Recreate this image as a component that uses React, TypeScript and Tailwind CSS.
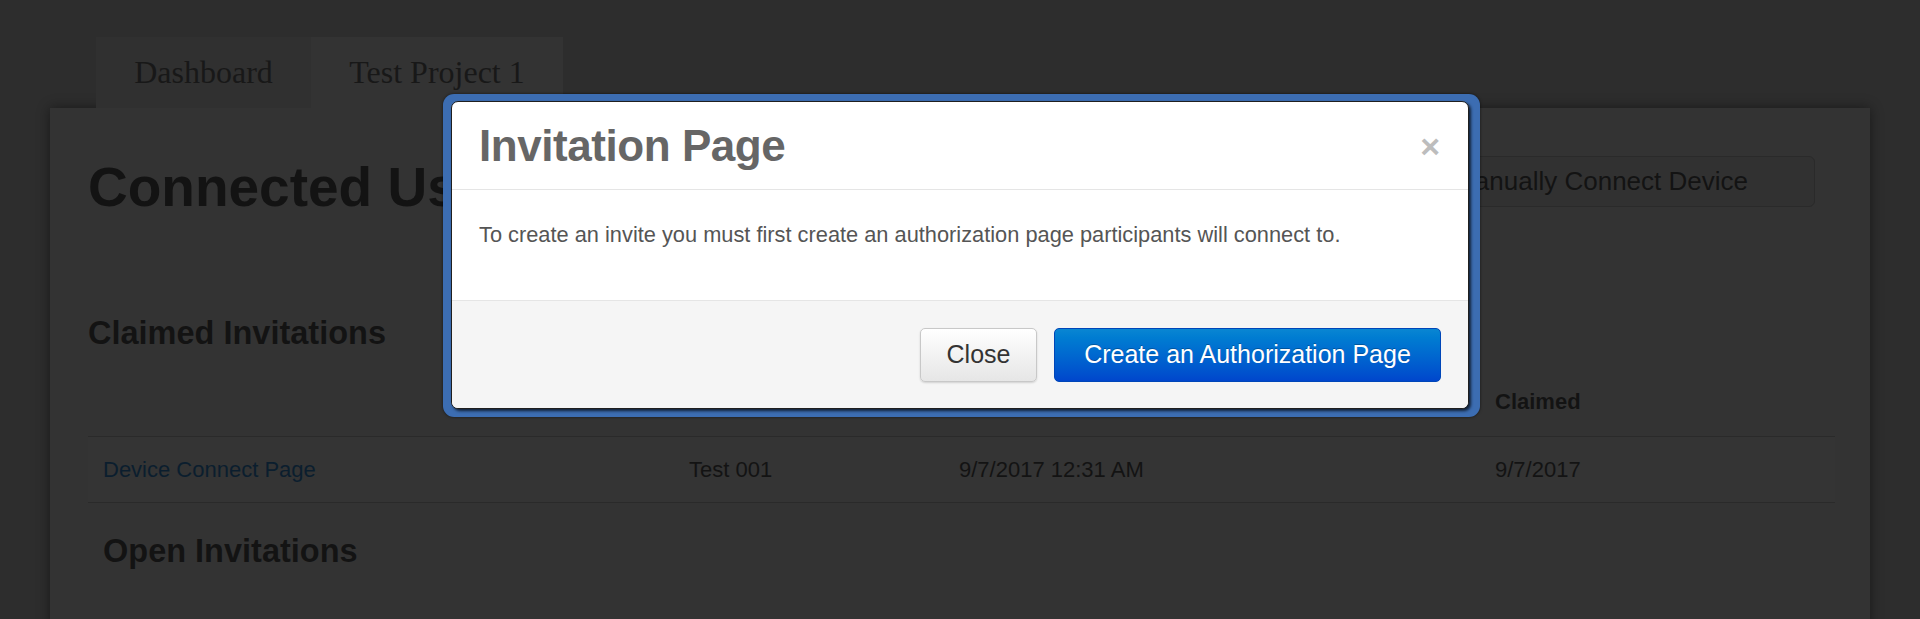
const sans = { fontFamily: '"Liberation Sans", Arial, sans-serif' };

const claimed = [
  { page: 'Device Connect Page', name: 'Test 001', invited: '9/7/2017 12:31 AM', claimedOn: '9/7/2017' },
];

function InvitationModal() {
  return (
    <div className="absolute left-[443px] top-[94px] w-[1037px] rounded-[11px] bg-[#3c6db2] pl-[8px] pr-[11px] pt-[7px] pb-[8px] shadow-[0_0_3px_rgba(0,0,0,0.6)]">
      <div className="overflow-hidden rounded-[7px] border border-[#1f1f1f] bg-white shadow-[2px_2px_3px_rgba(0,0,0,0.7)]">
        <div className="flex h-[88px] items-center justify-between border-b border-[#e5e5e5] pl-[27px] pr-[28px]">
          <h3 className="text-[44px] font-bold leading-none text-[#666] tracking-[-0.01em]">Invitation Page</h3>
          <button className="text-[34px] font-bold leading-none text-[#bdbdbd]">×</button>
        </div>
        <div className="h-[111px] border-b border-[#e5e5e5] px-[27px] pt-[31px]">
          <p className="text-[21.8px] leading-[28px] text-[#555]">
            To create an invite you must first create an authorization page participants will connect to.
          </p>
        </div>
        <div className="flex h-[107px] items-center justify-end gap-[17px] bg-[#f5f5f5] pr-[27px]">
          <button className="h-[54px] w-[117px] rounded-[5px] border border-[#c8c8c8] bg-gradient-to-b from-white to-[#e6e6e6] text-[25px] text-[#333] shadow-[0_1px_2px_rgba(0,0,0,0.15)]">
            Close
          </button>
          <button className="h-[54px] w-[387px] rounded-[5px] border border-[#0046b8] bg-gradient-to-b from-[#0a86d2] to-[#0046cc] text-[25px] text-white [text-shadow:0_-1px_0_rgba(0,0,0,0.25)]">
            Create an Authorization Page
          </button>
        </div>
      </div>
    </div>
  );
}

export default function App() {
  return (
    <div className="relative h-[619px] w-full overflow-hidden bg-[#2d2d2d]" style={sans}>
      <div className="flex pl-[96px] pt-[37px]" style={{ fontFamily: '"Liberation Serif", "Times New Roman", serif' }}>
        <div className="flex h-[71px] w-[215px] items-center justify-center bg-[#303030] pb-[2px] text-[32px] text-[#181818]">Dashboard</div>
        <div className="flex h-[71px] w-[252px] items-center justify-center bg-[#333] pb-[2px] text-[32px] text-[#181818]">Test Project 1</div>
      </div>

      <div className="mx-[50px] h-[520px] bg-[#333] pl-[38px] pr-[35px] shadow-[0_0_12px_rgba(0,0,0,0.45)]">
        <div className="mr-[20px] flex items-start justify-between pt-[48px]">
          <h1 className="text-[55px] font-bold leading-[62px] text-[#131313]">Connected Users</h1>
          <button className="flex h-[51px] w-[404px] items-center justify-end rounded-[6px] border border-[#2a2a2a] bg-[#313131] pr-[66px] text-[26px] text-[#131313]">
            Manually Connect Device
          </button>
        </div>

        <h2 className="mt-[97px] text-[32.5px] font-bold leading-[36px] text-[#131313]">Claimed Invitations</h2>

        <div className="text-[22px] leading-[26px] text-[#131313]">
          <div className="grid h-[86px] grid-cols-[586px_270px_536px_1fr] items-end border-b border-[#2a2a2a] pb-[21px] font-bold">
            <div className="pl-[15px]"></div>
            <div className="pl-[15px]">Name</div>
            <div className="pl-[15px]">Invited</div>
            <div className="pl-[15px]">Claimed</div>
          </div>
          {claimed.map((row) => (
            <div key={row.page} className="grid h-[66px] grid-cols-[586px_270px_536px_1fr] items-center border-b border-[#2a2a2a] bg-[#343434]">
              <div className="pl-[15px] text-[#0b1e2e]">{row.page}</div>
              <div className="pl-[15px]">{row.name}</div>
              <div className="pl-[15px]">{row.invited}</div>
              <div className="pl-[15px]">{row.claimedOn}</div>
            </div>
          ))}
        </div>

        <h2 className="mt-[30px] pl-[15px] text-[32.5px] font-bold leading-[36px] text-[#131313]">Open Invitations</h2>
      </div>

      <InvitationModal />
    </div>
  );
}
